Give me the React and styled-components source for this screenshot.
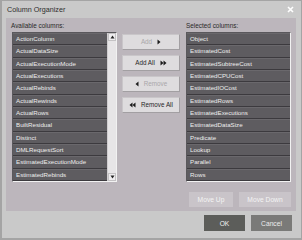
import React from "react";
import styled, { createGlobalStyle } from "styled-components";

const Global = createGlobalStyle`
  html, body { margin: 0; padding: 0; background: #c9c9c9; }
  body { width: 302px; height: 240px; overflow: hidden; font-family: "Liberation Sans", Arial, sans-serif; }
  * { box-sizing: border-box; }
`;

const Window = styled.div`
  width: 302px;
  height: 240px;
  background: #c9c9c9;
  border: 1px solid #a4a4a4;
  border-left-width: 2px;
  border-bottom-width: 2px;
  display: flex;
  flex-direction: column;
`;

const TitleBar = styled.div`
  height: 17px;
  display: flex;
  align-items: center;
  justify-content: space-between;
  padding: 0 7px 0 5px;
`;

const Title = styled.span`
  font-size: 7.2px;
  color: #2e2e2e;
`;

const Panel = styled.div`
  margin: 0 5px 0 4px;
  height: 193px;
  background: #bcb6bc;
  display: flex;
  padding: 4px 4px 0 6px;
`;

const Column = styled.div`
  display: flex;
  flex-direction: column;
  width: ${(p) => p.$w}px;
`;

const Label = styled.div`
  font-size: 6.4px;
  color: #2a2a2a;
  height: 10px;
  line-height: 8px;
  margin-left: ${(p) => p.$ml || 0}px;
`;

const ListBox = styled.div`
  height: 150px;
  border: 1px solid;
  border-color: #5a585c #f2f2f2 #f2f2f2 #5a585c;
  background: #4c4a4e;
  display: flex;
`;

const Rows = styled.div`
  flex: 1;
  display: flex;
  flex-direction: column;
`;

const Row = styled.div`
  height: 12.33px;
  background: #5e5c60;
  border-top: 1px solid #6a686c;
  border-bottom: 1px solid #3c3a3e;
  color: #ededed;
  font-size: 6.2px;
  line-height: 10px;
  padding-left: 3px;
  white-space: nowrap;
  overflow: hidden;
`;

const ScrollBar = styled.div`
  width: 9px;
  background: #e7e5e7;
  display: flex;
  flex-direction: column;
  justify-content: space-between;
  border-left: 1px solid #d0ced0;
`;

const ScrollBtn = styled.div`
  height: 8px;
  display: flex;
  align-items: center;
  justify-content: center;
  background: #efedef;
  border: 1px solid #c4c2c4;
`;

const MidColumn = styled.div`
  width: 58px;
  margin: 12px 6px 0 5px;
  display: flex;
  flex-direction: column;
  gap: 5.5px;
`;

const ActionButton = styled.div`
  height: 15.5px;
  background: #dedcde;
  border: 1px solid;
  border-color: #c9c6c9 #a29fa2 #a29fa2 #c9c6c9;
  display: flex;
  align-items: center;
  justify-content: center;
  gap: 5px;
  font-size: 6.3px;
  color: ${(p) => (p.$disabled ? "#a9a7a9" : "#262626")};
`;

const MoveRow = styled.div`
  display: flex;
  justify-content: flex-end;
  gap: 6px;
  margin-top: 10px;
`;

const FlatButton = styled.div`
  width: ${(p) => p.$w}px;
  height: ${(p) => p.$h}px;
  background: ${(p) => p.$bg};
  color: ${(p) => p.$fg};
  font-size: 6.7px;
  display: flex;
  align-items: center;
  justify-content: center;
`;

const Footer = styled.div`
  display: flex;
  justify-content: flex-end;
  gap: 6px;
  padding: 4px 9px 0 0;
`;

const Arrow = ({ dir = "right", double = false }) => {
  const one = (x) =>
    dir === "right"
      ? `M${x} 0.5 L${x + 3} 3 L${x} 5.5 Z`
      : `M${x + 3} 0.5 L${x} 3 L${x + 3} 5.5 Z`;
  const w = double ? 7 : 4;
  return (
    <svg width={w} height="6" viewBox={`0 0 ${w} 6`}>
      <path d={one(0.5)} fill="#1c1c1c" />
      {double && <path d={one(3.5)} fill="#1c1c1c" />}
    </svg>
  );
};

const Tri = ({ up }) => (
  <svg width="5" height="4" viewBox="0 0 5 4">
    <path d={up ? "M0.5 3.5 L2.5 0.5 L4.5 3.5 Z" : "M0.5 0.5 L2.5 3.5 L4.5 0.5 Z"} fill="#222" />
  </svg>
);

const available = [
  "ActionColumn",
  "ActualDataSize",
  "ActualExecutionMode",
  "ActualExecutions",
  "ActualRebinds",
  "ActualRewinds",
  "ActualRows",
  "BuiltResidual",
  "Distinct",
  "DMLRequestSort",
  "EstimatedExecutionMode",
  "EstimatedRebinds",
];

const selected = [
  "Object",
  "EstimatedCost",
  "EstimatedSubtreeCost",
  "EstimatedCPUCost",
  "EstimatedIOCost",
  "EstimatedRows",
  "EstimatedExecutions",
  "EstimatedDataSize",
  "Predicate",
  "Lookup",
  "Parallel",
  "Rows",
];

export default function App() {
  return (
    <>
      <Global />
      <Window>
        <TitleBar>
          <Title>Column Organizer</Title>
          <svg width="7" height="7" viewBox="0 0 7 7">
            <path d="M1 1 L6 6 M6 1 L1 6" stroke="#ffffff" strokeWidth="1.6" />
          </svg>
        </TitleBar>
        <Panel>
          <Column $w={105}>
            <Label $ml={-1}>Available columns:</Label>
            <ListBox>
              <Rows>
                {available.map((t) => (
                  <Row key={t}>{t}</Row>
                ))}
              </Rows>
              <ScrollBar>
                <ScrollBtn>
                  <Tri up />
                </ScrollBtn>
                <ScrollBtn>
                  <Tri />
                </ScrollBtn>
              </ScrollBar>
            </ListBox>
          </Column>
          <MidColumn>
            <ActionButton $disabled>
              Add <Arrow />
            </ActionButton>
            <ActionButton>
              Add All <Arrow double />
            </ActionButton>
            <ActionButton $disabled>
              <Arrow dir="left" /> Remove
            </ActionButton>
            <ActionButton>
              <Arrow dir="left" double /> Remove All
            </ActionButton>
          </MidColumn>
          <Column $w={105}>
            <Label>Selected columns:</Label>
            <ListBox>
              <Rows>
                {selected.map((t) => (
                  <Row key={t}>{t}</Row>
                ))}
              </Rows>
            </ListBox>
            <MoveRow>
              <FlatButton $w={44} $h={15} $bg="#c9c4c9" $fg="#f4f4f4">
                Move Up
              </FlatButton>
              <FlatButton $w={52} $h={15} $bg="#c9c4c9" $fg="#f4f4f4">
                Move Down
              </FlatButton>
            </MoveRow>
          </Column>
        </Panel>
        <Footer>
          <FlatButton $w={41} $h={16} $bg="#5c5d5a" $fg="#f2f2f2">
            OK
          </FlatButton>
          <FlatButton $w={41} $h={16} $bg="#7a7a78" $fg="#ececec">
            Cancel
          </FlatButton>
        </Footer>
      </Window>
    </>
  );
}
